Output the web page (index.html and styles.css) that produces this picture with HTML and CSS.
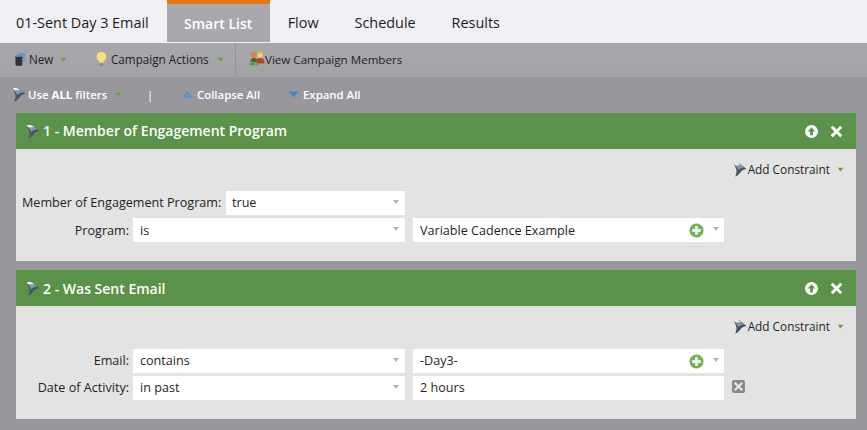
FILE: index.html
```html
<!DOCTYPE html>
<html lang="en">
<head>
<meta charset="utf-8">
<title>Smart List</title>
<link rel="stylesheet" href="styles.css">
</head>
<body>
<svg class="defs" width="0" height="0" aria-hidden="true">
  <defs>
    <symbol id="funnel" viewBox="0 0 16 16"><path d="M.8 1C5 0 8 .8 10 3l5.500 4.500C12 8 9.500 9.500 8.500 11.500 7 13.500 5 15.500 2.500 16 4 13 4.500 10 3.500 7.500 2.800 5.500 1.800 3 .8 1z" fill="#46566c"/><path d="M.8 1C5 0 8 .8 10 3l3 2.500C10 6 7.500 6.800 6 8.500 5 6 3 3.500.8 1z" fill="#8b96a3"/><path d="M.8 1c3-.8 6.200-.3 8 1.500C6.500 3.500 4.500 3.300 2.500 3z" fill="#eceef1"/></symbol>
    <symbol id="caret" viewBox="0 0 8 6"><path d="M.5 .8h7L4 5.500z" fill="#5fa33f"/></symbol>
    <symbol id="plus" viewBox="0 0 16 16"><circle cx="8" cy="8" r="7.500" fill="#6fb456"/><path d="M6.500 3.500h3v3h3v3h-3v3h-3v-3h-3v-3h3z" fill="#f1f7ee"/></symbol>
    <symbol id="up" viewBox="0 0 14 14"><circle cx="7" cy="7" r="7" fill="#fff"/><path d="M7 2.500 11 7H8.500v4h-3V7H3z" fill="#5a9249"/></symbol>
    <symbol id="close" viewBox="0 0 14 14"><path d="M3 .8 7 4.800 11 .8 13.200 3 9.200 7l4 4L11 13.200l-4-4-4 4L.8 11l4-4-4-4z" fill="#fff"/></symbol>
  </defs>
</svg>

<nav class="tabs">
  <span class="tab tab-title">01-Sent Day 3 Email</span>
  <span class="tab tab-active">Smart List</span>
  <span class="tab">Flow</span>
  <span class="tab">Schedule</span>
  <span class="tab">Results</span>
</nav>

<div class="toolbar">
  <span class="tool tool-new">
    <svg class="ico-new" viewBox="0 0 11 15"><path d="M3.500 .5H11v10H3.500z" fill="#5f9fd0"/><path d="M.5 4.500c0-1 1.500-1.500 3.500-1.500s4 .5 4 1.500V14l-1 1H1.500l-1-1z" fill="#2f3338"/><path d="M.5 3.800C1.500 3 6.500 3 8 3.800v1.200H.5z" fill="#87949f"/></svg>
    New
    <svg class="caret"><use href="#caret"/></svg>
  </span>
  <span class="tool tool-actions">
    <svg class="ico-bulb" viewBox="0 0 12 16"><path d="M6 .5a5.300 5.300 0 0 1 3 9.700c-.6.500-.8 1.100-.9 1.800H3.900c-.1-.7-.3-1.300-.9-1.800A5.300 5.300 0 0 1 6 .5z" fill="#f6e27c"/><path d="M4 12.500h4v2.500l-1 .7H5l-1-.7z" fill="#85888c"/></svg>
    Campaign Actions
    <svg class="caret"><use href="#caret"/></svg>
  </span>
  <span class="tool tool-members">
    <svg class="ico-people" viewBox="0 0 16 16"><path d="M1.500 11c0-3 1.500-4 3.500-4s3.500 1 3.500 4z" fill="#6e4a35"/><path d="M7 12.500c0-4 1.500-5.500 4-5.500s4.500 1.500 4.500 5.500z" fill="#b5432c"/><circle cx="5" cy="4" r="3" fill="#c98a4a"/><circle cx="11" cy="4" r="3.200" fill="#e8bf57"/><circle cx="11" cy="4.800" r="1.800" fill="#f3d9a8"/><path d="M.5 12h2.500V9.500l3.200 3-3.200 3V14H.5z" fill="#3f9e3a"/><path d="M10 12H7.500V9.500l-3 3 3 3V14H10z" fill="#54ad42"/></svg>
    View Campaign Members
  </span>
</div>

<div class="filterbar">
  <span class="fitem fitem-use"><svg class="funnel"><use href="#funnel"/></svg>Use <b>ALL</b> filters<svg class="caret"><use href="#caret"/></svg></span>
  <span class="sep">|</span>
  <span class="fitem fitem-collapse"><svg class="tri" viewBox="0 0 12 8"><path d="M6 .5 11.500 7.500H.5z" fill="#4f8fc9"/><path d="M6 3 8.500 6h-5z" fill="#98989c"/></svg>Collapse All</span>
  <span class="fitem"><svg class="tri" viewBox="0 0 12 8"><path d="M.5 .5h11L6 7.500z" fill="#3f87c9"/></svg>Expand All</span>
</div>

<section class="panel">
  <header class="phead">
    <svg class="funnel"><use href="#funnel"/></svg>
    <h2>1 - Member of Engagement Program</h2>
    <svg class="pbtn"><use href="#up"/></svg>
    <svg class="pbtn pbtn-x"><use href="#close"/></svg>
  </header>
  <div class="pbody">
    <div class="constraint"><svg class="funnel"><use href="#funnel"/></svg>Add Constraint<svg class="caret"><use href="#caret"/></svg></div>
    <div class="row row-first">
      <label class="lbl lbl-long">Member of Engagement Program:</label>
      <div class="field w-short"><span>true</span><i class="drop"></i></div>
    </div>
    <div class="row">
      <label class="lbl">Program:</label>
      <div class="field w-mid"><span>is</span><i class="drop"></i></div>
      <div class="field w-wide"><span>Variable Cadence Example</span><svg class="plus"><use href="#plus"/></svg><i class="drop"></i></div>
    </div>
  </div>
</section>

<section class="panel">
  <header class="phead">
    <svg class="funnel"><use href="#funnel"/></svg>
    <h2>2 - Was Sent Email</h2>
    <svg class="pbtn"><use href="#up"/></svg>
    <svg class="pbtn pbtn-x"><use href="#close"/></svg>
  </header>
  <div class="pbody">
    <div class="constraint"><svg class="funnel"><use href="#funnel"/></svg>Add Constraint<svg class="caret"><use href="#caret"/></svg></div>
    <div class="row row-email">
      <label class="lbl">Email:</label>
      <div class="field w-mid"><span>contains</span><i class="drop"></i></div>
      <div class="field w-wide"><span>-Day3-</span><svg class="plus"><use href="#plus"/></svg><i class="drop"></i></div>
    </div>
    <div class="row">
      <label class="lbl">Date of Activity:</label>
      <div class="field w-mid"><span>in past</span><i class="drop"></i></div>
      <div class="field w-wide"><span>2 hours</span></div>
      <svg class="remove" viewBox="0 0 13 13"><rect width="13" height="13" rx="2" fill="#8a8a8a"/><path d="M3.500 2 6.500 5l3-3L11 3.500l-3 3 3 3L9.500 11l-3-3-3 3L2 9.500l3-3-3-3z" fill="#e8e8e8"/></svg>
    </div>
  </div>
</section>
</body>
</html>
```
FILE: styles.css
```css
* { box-sizing: border-box; }
html, body { margin: 0; height: 430px; overflow: hidden; }
body {
  background: #98989c;
  font-family: "Open Sans", "Liberation Sans", sans-serif;
  font-size: 12.6px;
  color: #222;
}
.defs { position: absolute; }
svg { flex: none; display: block; }

.tabs {
  display: flex;
  height: 43px;
  background: #efeff4;
  font-size: 14.4px;
  color: #1c1c1c;
}
.tab { display: flex; align-items: center; padding-top: 2px; margin-right: 36px; }
.tab-title { margin-left: 16px; margin-right: 18px; }
.tab-active {
  width: 103px;
  height: 42px;
  margin-right: 18px;
  justify-content: center;
  background: #a9a9ad;
  border-top: 4px solid #e8790c;
  padding-top: 0;
  color: #fff;
  font-size: 14px;
  font-weight: 600;
}

.toolbar {
  display: flex;
  align-items: center;
  height: 34px;
  background: linear-gradient(#a8a8ac, #a3a3a7);
  color: #1f1f22;
  font-size: 11.7px;
}
.tool { display: flex; align-items: center; height: 100%; padding-bottom: 2px; }
.tool-new { margin-left: 15px; width: 81px; }
.ico-new { width: 10px; height: 14px; margin-right: 4px; }
.tool-new .caret { margin-left: 7px; }
.tool-actions { width: 139px; }
.ico-bulb { width: 11px; height: 16px; margin-right: 4px; }
.tool-actions .caret { margin-left: 8px; }
.tool-members { border-left: 1px solid #939397; padding-left: 13px; font-size: 11.6px; }
.ico-people { width: 16px; height: 16px; }
.caret { width: 7px; height: 5px; }

.filterbar {
  display: flex;
  align-items: center;
  height: 36px;
  padding: 0 0 2px 12px;
  color: #fff;
  font-weight: 600;
  font-size: 11.4px;
}
.filterbar b { font-weight: 700; margin: 0 3px; }
.fitem { display: flex; align-items: center; }
.fitem .funnel { margin-right: 2px; }
.fitem .caret { margin-left: 8px; }
.fitem-use { width: 135px; }
.sep { width: 35px; font-weight: 400; }
.fitem-collapse { width: 106px; }
.tri { width: 11px; height: 7px; margin-right: 4px; }
.funnel { width: 14px; height: 15px; }

.panel { margin: 0 11px 9px 16px; }
.phead {
  display: flex;
  align-items: center;
  height: 36px;
  padding: 0 13px 0 10px;
  background: #5a9249;
  color: #fff;
}
.phead h2 { flex: 1; margin: -2px 0 0 3px; font-size: 14px; font-weight: 600; }
.panel + .panel h2 { margin-top: 0; }
.pbtn { width: 13px; height: 13px; }
.pbtn-x { margin-left: 12px; }
.pbody { background: #e3e3e3; padding: 13px 0 19px; }
.constraint {
  display: flex;
  align-items: center;
  justify-content: flex-end;
  height: 16px;
  padding: 0 12px 2px 0;
  margin-bottom: 13px;
  color: #1f1f1f;
  font-size: 11.8px;
}
.constraint .funnel { margin-right: 1px; }
.constraint .caret { margin-left: 7px; }
.row { display: flex; align-items: center; height: 24px; margin-top: 3px; padding-left: 6px; }
.row-first { margin-top: 13px; }
.row-email { margin-top: 14px; }
.lbl { width: 107px; margin: -1px 4px 0 0; text-align: right; color: #1f1f1f; white-space: nowrap; }
.lbl-long { width: 199px; margin-right: 5px; }
.field {
  display: flex;
  align-items: center;
  height: 24px;
  padding: 0 6px 0 7px;
  background: #fff;
  color: #1f1f1f;
}
.field span { flex: 1; margin-top: -1px; }
.field + .field { margin-left: 8px; padding-right: 5px; }
.row-first + .row .lbl { margin-top: 0; }
.row-first + .row .field span { margin-top: 1px; }
.w-short { width: 179px; padding-left: 6px; }
.w-mid { width: 272px; }
.w-wide { width: 311px; }
.drop {
  width: 0;
  height: 0;
  margin-top: -2px;
  border-left: 3.500px solid transparent;
  border-right: 3.500px solid transparent;
  border-top: 4px solid #b3b3b3;
}
.plus { width: 15px; height: 15px; margin-right: 9px; }
.remove { width: 13px; height: 13px; margin: -4px 0 0 8px; }
```
